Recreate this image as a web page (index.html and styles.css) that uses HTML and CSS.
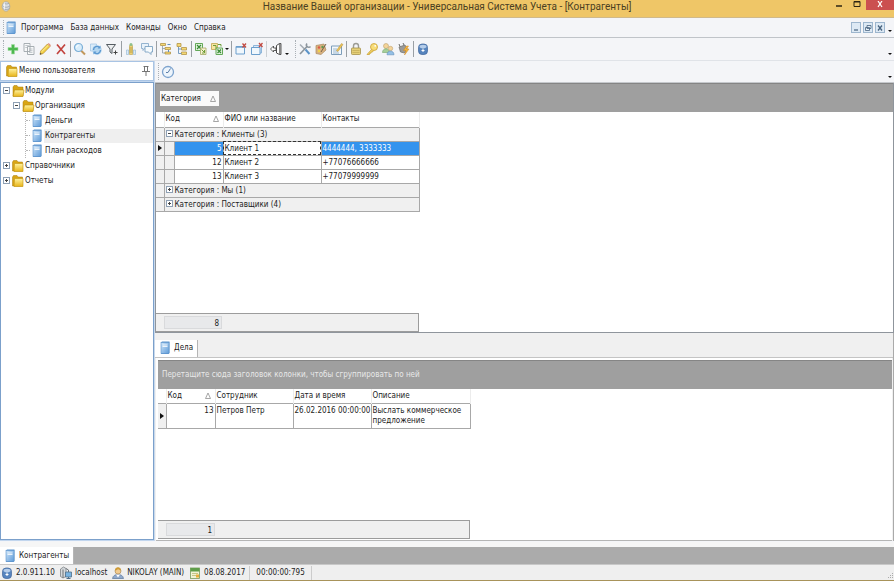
FILE: index.html
```html
<!DOCTYPE html>
<html lang="ru">
<head>
    <meta charset="UTF-8">
    <meta name="viewport" content="width=device-width, initial-scale=1.0">
    <title>Универсальная Система Учета - Контрагенты</title>
    <link rel="stylesheet" href="styles.css">
</head>
<body>
    <!-- icon sprite -->
    <svg class="sprite" aria-hidden="true">
        <defs>
            <linearGradient id="blueFill" x1="0" y1="0" x2="1" y2="1">
                <stop offset="0" stop-color="#cfe6fa"/>
                <stop offset="1" stop-color="#5f9bd8"/>
            </linearGradient>
            <linearGradient id="goldFill" x1="0" y1="0" x2="0" y2="1">
                <stop offset="0" stop-color="#fff3a0"/>
                <stop offset="1" stop-color="#e8b418"/>
            </linearGradient>
        </defs>
        <symbol id="i-book" viewBox="0 0 14 14"><path d="M3 1.500l1-1h7.500v11l-1 1.500H3z" fill="#5c93cc"/><rect x="3" y="1.500" width="8" height="11" fill="url(#blueFill)" stroke="#5c93cc" stroke-width=".6"/><path d="M4.500 4h5M4.500 5.500h5" stroke="#fff" stroke-width=".8"/></symbol>
        <symbol id="i-folder" viewBox="0 0 14 14"><path d="M1.500 12V3l1-1.500h3.500l1 1.500h4.500V12z" fill="#d9a514" stroke="#a87c0c" stroke-width=".5"/><path d="M3.500 4.500h8.500v8H3z" fill="url(#goldFill)" stroke="#c2930f" stroke-width=".6"/></symbol>
        <symbol id="i-open" viewBox="0 0 14 14"><path d="M2 12V3l1-1.500h3l1 1.500h5V12z" fill="#d9a514" stroke="#a87c0c" stroke-width=".5"/><path d="M3.500 6h9.500L12 12.500H2z" fill="url(#goldFill)" stroke="#b98b0d" stroke-width=".6"/></symbol>
        <symbol id="i-db" viewBox="0 0 14 14"><ellipse cx="7" cy="7.500" rx="4.500" ry="5.500" fill="#d9dde1" stroke="#9aa0a5" stroke-width=".7"/><path d="M4 3.500c2 1.500 5 1.500 6.500 0M3 7c2 2 6 2 8.500 0M3.500 10c2 1.500 5.500 1.500 7.500 0" stroke="#93999e" fill="none" stroke-width=".8"/><path d="M5 3v8" stroke="#fff"/></symbol>
        <symbol id="i-plus" viewBox="0 0 14 14"><path d="M5.500 2.500h3v3h3.500v3H8.500v3.500h-3V8.500H2v-3h3.500z" fill="#4db84f" stroke="#a5dda4" stroke-width=".6"/></symbol>
        <symbol id="i-copy" viewBox="0 0 14 14"><path d="M2 1.500h6v8H2zM5.500 4.500h6.500v8H5.500z" fill="#f8f9fa" stroke="#9fa6ac" stroke-width=".9"/><path d="M7 7h3.500M7 8.700h3.500M7 10.400h3.500M3.300 3.500h3.500M3.300 5.500H5" stroke="#a9b0b6" stroke-width=".7"/></symbol>
        <symbol id="i-pencil" viewBox="0 0 14 14"><path d="M2 12.500l.7-3.500L9.500 2l2.500 2.500L5.200 11.500z" fill="#f2cf45" stroke="#b68b2a" stroke-width=".7"/><path d="M9.500 2l1.200-1 2.300 2.300-1 1.200z" fill="#e0927e"/><path d="M3.500 9.800L10.500 3" stroke="#fff1a0"/><path d="M2 12.500l.4-1.700 1.300 1.200z" fill="#444"/></symbol>
        <symbol id="i-cross" viewBox="0 0 14 14"><path d="M3 2.500l8 9.500M11 2.500L3 12" stroke="#c2443f" stroke-width="1.700" fill="none"/></symbol>
        <symbol id="i-lens" viewBox="0 0 14 14"><path d="M8 8.500l4 4" stroke="#c2985c" stroke-width="2"/><circle cx="5.500" cy="5.500" r="4" fill="#d8edfb" stroke="#7baed6" stroke-width="1.200"/><path d="M3.500 5.500a2 2 0 0 1 2-2" stroke="#fff" fill="none"/></symbol>
        <symbol id="i-refresh" viewBox="0 0 14 14"><path d="M1.500 2h6v7h-6z" fill="#dcecf9" stroke="#9cc2e2" stroke-width=".7"/><circle cx="8" cy="8" r="4.800" fill="#b4d6f0"/><path d="M4.500 8a3.500 3.500 0 0 1 6-2.500M11.500 8a3.500 3.500 0 0 1-6 2.500" stroke="#5c98d0" stroke-width="1.400" fill="none"/><path d="M11.500 3.500v3h-3zM4.500 12.500v-3h3z" fill="#5c98d0"/></symbol>
        <symbol id="i-filter" viewBox="0 0 14 14"><path d="M1.500 2.500h9L7 7v4.500L5 10V7z" fill="#eceef0" stroke="#555c62" stroke-width="1"/><path d="M10.500 8.500v4M8.500 10.500h4" stroke="#444" stroke-width="1"/></symbol>
        <symbol id="i-tower" viewBox="0 0 14 14"><path d="M5.500 3.500h3v9h-3z" fill="#f0d071" stroke="#b8a04c" stroke-width=".6"/><path d="M5.500 6h3M5.500 8h3M5.500 10h3" stroke="#a5903c" stroke-width=".7"/><circle cx="7" cy="2.500" r="1.500" fill="#8fc08b"/><path d="M2.500 8h2v4.500h-2zM9.500 8h2v4.500h-2z" fill="#dcebf6" stroke="#8fb3d2" stroke-width=".6"/></symbol>
        <symbol id="i-chat" viewBox="0 0 14 14"><path d="M1.500 1.500h7v5h-4l-1.500 2v-2H1.500z" fill="#e9f2fa" stroke="#8aadcb" stroke-width=".9"/><path d="M5 4.500h7.500V10h-1.500v2.500L8.500 10H5z" fill="#f6fafd" stroke="#7ca1c2" stroke-width=".9"/></symbol>
        <symbol id="i-expand" viewBox="0 0 14 14"><path d="M1.500 1.500h5v2h-5zM6 5.500h5.500v2H6zM6 10h5.500v2H6z" fill="#f5d873" stroke="#b3964a" stroke-width=".8"/><path d="M3.500 4v7H6M3.500 6.500H6" stroke="#8c9aa6" stroke-width=".8" fill="none"/><path d="M9.500 8v2M8.500 2.500h3" stroke="#5e8fc0"/></symbol>
        <symbol id="i-collapse" viewBox="0 0 14 14"><path d="M2 1.500h4v3H2zM6.500 5.500h5v2.500h-5zM6.500 10h5v2.500h-5z" fill="#f5d873" stroke="#b3964a" stroke-width=".8"/><path d="M3.500 5v6.500h3M3.500 7h3" stroke="#6a93ba" stroke-width=".9" fill="none"/></symbol>
        <symbol id="i-xls-out" viewBox="0 0 14 14"><path d="M1.500 1.500h7v7h-7z" fill="#e4f3df" stroke="#63a858"/><path d="M3 3l4 4M7 3L3 7" stroke="#388b35" stroke-width="1.200"/><path d="M6.500 6h5.500v6.500H6.500z" fill="#f7f1cf" stroke="#a5a864" stroke-width=".8"/><path d="M7.500 7.500l3 3M10.500 8v3H8" stroke="#6e9e3a" fill="none"/></symbol>
        <symbol id="i-xls-in" viewBox="0 0 14 14"><path d="M1.500 1.500h6v6h-6z" fill="#f8e6a4" stroke="#c2a650" stroke-width=".8"/><path d="M6 6h6.500v6.500H6z" fill="#e4f3df" stroke="#63a858"/><path d="M7.500 7.500l3.500 3.500M11 7.500L7.500 11" stroke="#388b35" stroke-width="1.200"/><path d="M8 2.500h3v2M3 3.500h3v3" stroke="#6e9e3a" fill="none"/></symbol>
        <symbol id="i-winclose" viewBox="0 0 14 14"><path d="M2 4.500h8.500v7.500H2z" fill="#f0f7fd" stroke="#6c9fcd"/><path d="M2 5h8" stroke="#6c9fcd" stroke-width="1.500"/><path d="M8.500 1.500l3.500 4M12 1.500l-3.500 4" stroke="#c24a42" stroke-width="1.300"/></symbol>
        <symbol id="i-winall" viewBox="0 0 14 14"><path d="M3.500 3.500h8v7.500h-8z" fill="#dbeafa" stroke="#8fb6da"/><path d="M1.500 5.500h8.500v7H1.500z" fill="#f0f7fd" stroke="#6c9fcd"/><path d="M9 1l3.500 4M12.500 1L9 5" stroke="#c24a42" stroke-width="1.300"/></symbol>
        <symbol id="i-door" viewBox="0 0 14 14"><path d="M7.500 3.500l3-2v11l-3-1.500z" fill="#fff" stroke="#3b3b3b" stroke-width=".9"/><path d="M10.500 1.500h1.500v11h-1.500" fill="#bbb" stroke="#3b3b3b" stroke-width=".8"/><path d="M1.500 7l3-3v2h2.500v2.500H4.500V10z" fill="#fff" stroke="#3b3b3b" stroke-width=".8"/></symbol>
        <symbol id="i-tools" viewBox="0 0 14 14"><path d="M2 2.500l5 5" stroke="#a6adb4" stroke-width="1.600"/><path d="M7.500 7.500l4 4.500" stroke="#5c94c8" stroke-width="2"/><path d="M2 12l7.500-8" stroke="#8c959d" stroke-width="1.700"/><path d="M9 1.500a2.200 2.200 0 1 0 3.500 3" stroke="#8c959d" stroke-width="1.500" fill="none"/></symbol>
        <symbol id="i-paint" viewBox="0 0 14 14"><path d="M2 3.500l8-1.500 2 6-5 4.500-5-1z" fill="#d9b17f" stroke="#a98a60" stroke-width=".7"/><circle cx="5" cy="5.500" r="1.200" fill="#de5a45"/><circle cx="8.500" cy="5" r="1.200" fill="#5d9a50"/><circle cx="5" cy="9" r="1.200" fill="#f0d14a"/><path d="M7 10l5-8" stroke="#786248"/></symbol>
        <symbol id="i-form" viewBox="0 0 14 14"><path d="M1.500 4h10v8.500h-10z" fill="#f4f8fc" stroke="#7d9dba"/><path d="M3 7h4M3 9h5M3 11h6" stroke="#86a6c4" stroke-width=".8"/><path d="M6.500 8.500l5-7 1.500 1-5 7z" fill="#ecc558" stroke="#b08a3b" stroke-width=".5"/></symbol>
        <symbol id="i-lock" viewBox="0 0 14 14"><path d="M4.500 7V4a2.500 2.500 0 0 1 5 0v3" fill="none" stroke="#9c9c95" stroke-width="1.400"/><rect x="2.500" y="6" width="9" height="6.500" rx=".8" fill="#e5cf78" stroke="#a5924b" stroke-width=".8"/><path d="M3.500 8.500h7M3.500 10.500h7" stroke="#c2a956" stroke-width=".7"/></symbol>
        <symbol id="i-key" viewBox="0 0 14 14"><path d="M7 7l-5 5.500h2.500v-1.300H6V10h1.500l1-1.500" fill="#f6d768" stroke="#c9a136" stroke-width=".8"/><circle cx="9" cy="5" r="3.500" fill="#f8dd78" stroke="#c9a136" stroke-width=".8"/><circle cx="10.200" cy="3.800" r=".9" fill="#fff"/></symbol>
        <symbol id="i-users" viewBox="0 0 14 14"><circle cx="5" cy="4" r="2.500" fill="#f3d49a" stroke="#bda06b" stroke-width=".6"/><path d="M1.500 10.500c0-5 7-5 7 0z" fill="#a6cf9a" stroke="#76a66c" stroke-width=".6"/><circle cx="9.500" cy="6.500" r="2.200" fill="#f3d49a" stroke="#bda06b" stroke-width=".6"/><path d="M6 12.800c0-5 7-5 7 0z" fill="#94c0e6" stroke="#628fb8" stroke-width=".6"/></symbol>
        <symbol id="i-plug" viewBox="0 0 14 14"><path d="M2 5l6-2 2.500 4.500-3 3.500-4-1z" fill="#9a9a98" stroke="#6d6d6a" stroke-width=".7"/><path d="M3 4.500L2 2M7 3L6 1" stroke="#6d6d6a"/><path d="M9.500 4L6.500 8.500h2.500L7.500 13l4.500-6H9.500l2-3z" fill="#f4b83c" stroke="#ce8423" stroke-width=".5"/></symbol>
        <symbol id="i-info" viewBox="0 0 14 14"><rect x="2.500" y="2" width="9" height="10.500" rx="3.500" fill="#5684be" stroke="#3f669c" stroke-width=".7"/><ellipse cx="7" cy="4.500" rx="3.500" ry="1.800" fill="#b5cdea"/><path d="M7 6.500v3.500M5.500 8.500h3" stroke="#fff"/></symbol>
        <symbol id="i-clock" viewBox="0 0 14 14"><circle cx="7" cy="7" r="5.500" fill="#eef5fc" stroke="#7da3ce" stroke-width="1.300"/><path d="M7 7.500l2.500-4M7 7.500H5" stroke="#5b7fa9" stroke-width="1" fill="none"/></symbol>
        <symbol id="i-pin" viewBox="0 0 14 14"><path d="M4.500 2.500h5M5.500 2.500V7M8.500 2.500V7M3 7.500h8M7 7.500V12" stroke="#666" stroke-width=".9" fill="none"/></symbol>
        <symbol id="i-server" viewBox="0 0 14 14"><path d="M1.500 3l3-2 2.500 1.500v8L4 12l-2.500-1.500z" fill="#d5d9dc" stroke="#6e7479" stroke-width=".7"/><path d="M4 3.500V12M7 2.500l2.500 1.500v2" stroke="#6e7479" fill="none"/><path d="M6.500 6h6v5h-6z" fill="#78b4e2" stroke="#516f88" stroke-width=".8"/><path d="M7.500 12.500h4M9.500 11v1.500" stroke="#516f88"/></symbol>
        <symbol id="i-user" viewBox="0 0 14 14"><path d="M1.500 12.500c.5-5.500 10.500-5.500 11 0z" fill="#8fa9cc" stroke="#46648d" stroke-width=".6"/><path d="M5 8.500l2 3 2-3" fill="#fff"/><circle cx="7" cy="5" r="3" fill="#f2cb8e" stroke="#a17c47" stroke-width=".6"/><path d="M4 4.500c0-4.500 6-4.500 6 0-2-.5-3-1.500-3-1.500S6 4.500 4 4.500z" fill="#cf9c37"/></symbol>
        <symbol id="i-cal" viewBox="0 0 14 14"><rect x="2.500" y="2" width="9" height="10.500" fill="#f2f3d5" stroke="#779a5c" stroke-width=".8"/><path d="M2.500 2h9v3.500h-9z" fill="#5f9e4a"/><path d="M4 7.500h6M4 9.500h6" stroke="#b9ba72" stroke-width=".8"/><path d="M8 8.500h3v3H8z" fill="#e8ae3b"/></symbol>
        <symbol id="i-sort" viewBox="0 0 8 8"><path d="M1.500 6.500L4 1l2.500 5.500z" fill="none" stroke="#8f8f8f" stroke-width=".8"/></symbol>
    </svg>

    <header class="titlebar">
        <svg class="icon"><use href="#i-db"/></svg>
        <h1>Название Вашей организации - Универсальная Система Учета - [Контрагенты]</h1>
        <div class="window-buttons">
            <button type="button" aria-label="Свернуть"><svg viewBox="0 0 10 8"><path d="M2 5h6" stroke="#2c2412" stroke-width="1.500"/></svg></button>
            <button type="button" aria-label="Развернуть"><svg viewBox="0 0 10 8"><path d="M2 .5h6v5H2zM2 1h6" fill="none" stroke="#2c2412"/></svg></button>
            <button type="button" class="close" aria-label="Закрыть"><svg viewBox="0 0 10 8"><path d="M3 0l4 6M7 0L3 6" stroke="#fff" stroke-width="1.200"/></svg></button>
        </div>
    </header>

    <nav class="menubar">
        <span class="grip"></span>
        <svg class="icon"><use href="#i-book"/></svg>
        <button type="button">Программа</button>
        <button type="button">База данных</button>
        <button type="button">Команды</button>
        <button type="button">Окно</button>
        <button type="button">Справка</button>
        <div class="mdi-buttons">
            <button type="button" aria-label="Свернуть окно"><svg viewBox="0 0 8 8"><path d="M2 6h4" stroke="#47637f" stroke-width="1.200"/></svg></button>
            <button type="button" aria-label="Восстановить окно"><svg viewBox="0 0 8 8"><path d="M3 1.500h4v3H3zM1.500 3.500h4v3h-4z" fill="#e6f0f9" stroke="#47637f" stroke-width=".8"/></svg></button>
            <button type="button" aria-label="Закрыть окно"><svg viewBox="0 0 8 8"><path d="M2 1.500l4 5M6 1.500l-4 5" stroke="#47637f" stroke-width="1.300"/></svg></button>
        </div>
        <span class="caret"></span>
    </nav>

    <div class="toolbar" role="toolbar" aria-label="Команды">
        <span class="grip"></span>
        <button type="button" aria-label="Добавить"><svg class="icon"><use href="#i-plus"/></svg></button>
        <button type="button" aria-label="Копировать"><svg class="icon"><use href="#i-copy"/></svg></button>
        <button type="button" aria-label="Изменить"><svg class="icon"><use href="#i-pencil"/></svg></button>
        <button type="button" aria-label="Удалить"><svg class="icon"><use href="#i-cross"/></svg></button>
        <span class="sep"></span>
        <button type="button" aria-label="Поиск"><svg class="icon"><use href="#i-lens"/></svg></button>
        <button type="button" aria-label="Обновить"><svg class="icon"><use href="#i-refresh"/></svg></button>
        <button type="button" aria-label="Фильтр"><svg class="icon"><use href="#i-filter"/></svg></button>
        <span class="sep"></span>
        <button type="button" aria-label="Ширина колонок"><svg class="icon"><use href="#i-tower"/></svg></button>
        <button type="button" aria-label="Примечания"><svg class="icon"><use href="#i-chat"/></svg></button>
        <span class="sep"></span>
        <button type="button" aria-label="Развернуть все"><svg class="icon"><use href="#i-expand"/></svg></button>
        <button type="button" aria-label="Свернуть все"><svg class="icon"><use href="#i-collapse"/></svg></button>
        <span class="sep"></span>
        <button type="button" aria-label="Экспорт"><svg class="icon"><use href="#i-xls-out"/></svg></button>
        <button type="button" aria-label="Импорт" class="split"><svg class="icon"><use href="#i-xls-in"/></svg><span class="caret"></span></button>
        <span class="sep"></span>
        <button type="button" aria-label="Закрыть окно"><svg class="icon"><use href="#i-winclose"/></svg></button>
        <button type="button" aria-label="Закрыть все"><svg class="icon"><use href="#i-winall"/></svg></button>
        <span class="sep light"></span>
        <button type="button" aria-label="Выход"><svg class="icon"><use href="#i-door"/></svg></button>
        <span class="caret"></span>
        <span class="grip"></span>
        <button type="button" aria-label="Настройки"><svg class="icon"><use href="#i-tools"/></svg></button>
        <button type="button" aria-label="Оформление"><svg class="icon"><use href="#i-paint"/></svg></button>
        <button type="button" aria-label="Форма"><svg class="icon"><use href="#i-form"/></svg></button>
        <span class="sep"></span>
        <button type="button" aria-label="Блокировка"><svg class="icon"><use href="#i-lock"/></svg></button>
        <button type="button" aria-label="Пароль"><svg class="icon"><use href="#i-key"/></svg></button>
        <button type="button" aria-label="Пользователи"><svg class="icon"><use href="#i-users"/></svg></button>
        <button type="button" aria-label="Подключение"><svg class="icon"><use href="#i-plug"/></svg></button>
        <span class="sep"></span>
        <button type="button" aria-label="О программе"><svg class="icon"><use href="#i-info"/></svg></button>
        <span class="caret last"></span>
    </div>

    <div class="workspace">
        <aside class="sidebar">
            <div class="sidebar-head">
                <svg class="icon"><use href="#i-folder"/></svg>
                <h2>Меню пользователя</h2>
                <button type="button" aria-label="Закрепить"><svg class="icon"><use href="#i-pin"/></svg></button>
            </div>
            <ul class="tree">
                <li>
                    <div class="node"><span class="toggle minus"></span><svg class="icon"><use href="#i-open"/></svg><span>Модули</span></div>
                    <ul>
                        <li>
                            <div class="node"><span class="toggle minus"></span><svg class="icon"><use href="#i-open"/></svg><span>Организация</span></div>
                            <ul class="leaves">
                                <li><a class="node" href="#money"><svg class="icon"><use href="#i-book"/></svg><span>Деньги</span></a></li>
                                <li><a class="node selected" href="#partners"><svg class="icon"><use href="#i-book"/></svg><span>Контрагенты</span></a></li>
                                <li><a class="node" href="#plan"><svg class="icon"><use href="#i-book"/></svg><span>План расходов</span></a></li>
                            </ul>
                        </li>
                    </ul>
                </li>
                <li><div class="node"><span class="toggle plus"></span><svg class="icon"><use href="#i-folder"/></svg><span>Справочники</span></div></li>
                <li><div class="node"><span class="toggle plus"></span><svg class="icon"><use href="#i-folder"/></svg><span>Отчеты</span></div></li>
            </ul>
        </aside>

        <main class="content">
            <div class="toolbar sub">
                <span class="grip"></span>
                <button type="button" aria-label="История"><svg class="icon"><use href="#i-clock"/></svg></button>
                <span class="caret last"></span>
            </div>

            <section class="pane master">
                <div class="group-bar">
                    <button type="button" class="group-chip">Категория <svg class="sort"><use href="#i-sort"/></svg></button>
                </div>
                <table class="grid clients">
                    <colgroup><col class="c-mark"><col class="c-indent"><col class="c-code"><col class="c-wide"><col class="c-wide"></colgroup>
                    <thead>
                        <tr>
                            <th></th>
                            <th colspan="2"><span class="head">Код <svg class="sort"><use href="#i-sort"/></svg></span></th>
                            <th>ФИО или название</th>
                            <th>Контакты</th>
                        </tr>
                    </thead>
                    <tbody>
                        <tr class="group"><td></td><td colspan="4"><span class="toggle minus"></span>Категория : Клиенты (3)</td></tr>
                        <tr class="current"><td class="mark"><span class="pointer"></span></td><td class="indent"></td><td class="num">5</td><td class="focused">Клиент 1</td><td>4444444, 3333333</td></tr>
                        <tr><td class="mark"></td><td class="indent"></td><td class="num">12</td><td>Клиент 2</td><td>+77076666666</td></tr>
                        <tr><td class="mark"></td><td class="indent"></td><td class="num">13</td><td>Клиент 3</td><td>+77079999999</td></tr>
                        <tr class="group"><td></td><td colspan="4"><span class="toggle plus"></span>Категория : Мы (1)</td></tr>
                        <tr class="group"><td></td><td colspan="4"><span class="toggle plus"></span>Категория : Поставщики (4)</td></tr>
                    </tbody>
                </table>
                <div class="summary clients"><span class="total">8</span></div>
            </section>

            <section class="pane detail">
                <div class="tabs">
                    <button type="button" class="tab"><svg class="icon"><use href="#i-book"/></svg>Дела</button>
                </div>
                <div class="detail-body">
                    <p class="group-bar hint">Перетащите сюда заголовок колонки, чтобы сгруппировать по ней</p>
                    <table class="grid tasks">
                        <colgroup><col class="c-mark"><col class="c-code"><col class="c-mid"><col class="c-mid"><col class="c-text"></colgroup>
                        <thead>
                            <tr>
                                <th></th>
                                <th><span class="head">Код <svg class="sort"><use href="#i-sort"/></svg></span></th>
                                <th>Сотрудник</th>
                                <th>Дата и время</th>
                                <th>Описание</th>
                            </tr>
                        </thead>
                        <tbody>
                            <tr><td class="mark"><span class="pointer"></span></td><td class="num">13</td><td>Петров Петр</td><td class="date">26.02.2016 00:00:00</td><td>Выслать коммерческое предложение</td></tr>
                        </tbody>
                    </table>
                    <div class="summary tasks"><span class="total">1</span></div>
                </div>
            </section>
        </main>
    </div>

    <div class="window-tabs">
        <button type="button" class="tab"><svg class="icon"><use href="#i-book"/></svg>Контрагенты</button>
    </div>

    <footer class="statusbar">
        <span><svg class="icon"><use href="#i-info"/></svg>2.0.911.10</span>
        <span><svg class="icon"><use href="#i-server"/></svg>localhost</span>
        <span><svg class="icon"><use href="#i-user"/></svg>NIKOLAY (MAIN)</span>
        <span><svg class="icon"><use href="#i-cal"/></svg>08.08.2017</span>
        <span class="timer">00:00:00:795</span>
        <svg class="resize" viewBox="0 0 8 8"><path d="M6 1h1v1H6zM4 3h1v1H4zM6 3h1v1H6zM2 5h1v1H2zM4 5h1v1H4zM6 5h1v1H6z" fill="#aaa"/></svg>
    </footer>
</body>
</html>
```

FILE: styles.css
```css
* { box-sizing: border-box; }
body {
    margin: 0;
    height: 100vh;
    display: flex;
    flex-direction: column;
    overflow: hidden;
    background: #f4f5f8;
    color: #1c1c1c;
    font: 8px/14px "DejaVu Sans Condensed", "DejaVu Sans", sans-serif;
    border-bottom: 1px solid #a8935a;
}
h1, h2, p, ul { margin: 0; padding: 0; font: inherit; }
ul { list-style: none; }
button { border: 0; padding: 0; background: none; font: inherit; color: inherit; }
a { color: inherit; text-decoration: none; }
.sprite { position: absolute; width: 0; height: 0; }
.icon { display: block; width: 14px; height: 14px; flex: none; }
.sort { width: 8px; height: 8px; flex: none; }
.caret { width: 0; border: 2px solid transparent; border-top-color: #111; border-bottom: 0; flex: none; }
.grip { align-self: stretch; margin: 2px 0; border-left: 1px dotted #aab0b6; }

/* title bar */
.titlebar {
    display: flex;
    align-items: flex-start;
    height: 18px;
    background: #efc667;
    border-bottom: 1px solid #d0b98a;
    flex: none;
}
.titlebar .icon { width: 12px; height: 12px; margin-right: 52px; }
.titlebar h1 { flex: 1; text-align: center; font: 10px/14px Roboto, sans-serif; color: #4b3f22; }
.window-buttons { display: flex; }
.window-buttons button { width: 18px; height: 10px; }
.window-buttons svg { display: block; width: 10px; height: 8px; margin: 0 auto; }
.window-buttons .close { width: 28px; background: #cb5050; }

/* menu and toolbars */
.menubar {
    display: flex;
    align-items: center;
    height: 20px;
    padding: 0 2px 0 3px;
    border-bottom: 1px solid #c0c4c9;
    flex: none;
}
.menubar > button { margin-right: 7px; }
.menubar .icon { margin-right: 3px; }
.mdi-buttons { display: flex; gap: 2px; margin-left: auto; }
.mdi-buttons button { width: 10px; height: 11px; border: 1px solid #9db6ce; background: #dde9f4; }
.mdi-buttons svg { display: block; width: 8px; height: 8px; }
.menubar .caret { margin: 6px 0 0 3px; }
.toolbar {
    display: flex;
    align-items: center;
    gap: 2px;
    height: 23px;
    padding: 0 3px;
    border-bottom: 1px solid #e0e3e8;
    flex: none;
}
.toolbar .sep { width: 1px; height: 16px; background: #9a9fa4; }
.toolbar .sep.light { background: #ccd0d4; }
.toolbar .split { display: flex; align-items: center; gap: 1px; }
.toolbar .caret { margin-top: 10px; }
.toolbar .split .caret { margin-top: 0; }
.toolbar .caret + .grip { margin-left: 4px; }
.toolbar .last { margin-left: auto; margin-right: -1px; }
.toolbar.sub { height: 22px; border-bottom-color: #c5c8cc; }

.workspace { flex: 1; display: flex; min-height: 0; }

/* sidebar */
.sidebar {
    width: 155px;
    flex: none;
    display: flex;
    flex-direction: column;
    gap: 1px;
    padding-bottom: 1px;
    border-right: 1px solid #c9d9ec;
    background: #c2d6ee;
}
.sidebar-head {
    display: flex;
    align-items: center;
    height: 20px;
    padding: 0 0 0 4px;
    border: 1px solid #a9c4e4;
    background: #fff;
}
.sidebar-head button { margin-left: auto; }
.tree {
    flex: 1;
    border: 1px solid #7ba0cb;
    background: #fff;
    padding: 0 0 0 2px;
}
.tree ul { padding-left: 10px; }
.tree .leaves { margin-left: 12px; padding-left: 0; border-left: 1px dotted #b5b5b5; }
.node { display: flex; align-items: center; height: 15px; }
.node > span:last-child { flex: 1; }
.leaves .node::before { content: ""; width: 4px; border-top: 1px dotted #b5b5b5; }
.leaves .node span { padding-left: 1px; }
.node.selected > span { background: #efefef; }
.toggle {
    display: inline-block;
    width: 7px;
    height: 7px;
    margin-right: 1px;
    border: 1px solid #8ea0b4;
    background: linear-gradient(#444, #444) center / 3px 1px no-repeat, #fff;
    flex: none;
}
.toggle.plus {
    background: linear-gradient(#444, #444) center / 3px 1px no-repeat,
                linear-gradient(#444, #444) center / 1px 3px no-repeat, #fff;
}

/* content */
.content { flex: 1; min-width: 0; display: flex; flex-direction: column; }
.pane { display: flex; flex-direction: column; min-height: 0; background: #fff; }
.master { flex: 250; border: solid #8f959c; border-width: 0 1px 1px; }
.detail { flex: 209; background: #f0f0f0; border-right: 1px solid #aaa; }
.group-bar {
    height: 29px;
    flex: none;
    padding: 7px 4px;
    background: #9f9f9f;
    border-top: 1px solid #858585;
}
.group-chip {
    display: flex;
    align-items: center;
    gap: 8px;
    padding: 0 2px 0 1px;
    background: #fafafa;
    line-height: 15px;
}
.hint { color: #e8e8e8; }

.grid { table-layout: fixed; border-collapse: collapse; width: 263px; flex: none; }
.tasks.grid { width: 312px; }
.c-mark { width: 8px; }
.c-indent { width: 10px; }
.c-code { width: 49px; }
.c-wide { width: 98px; }
.c-mid { width: 78px; }
.c-text { width: 99px; }
.grid th { height: 15px; padding: 0 1px; text-align: left; font-weight: normal; line-height: 14px; border-right: 1px solid #ececec; }
.grid td { height: 14px; padding: 0 1px; line-height: 13px; border: 1px solid #a8a8a8; vertical-align: top; }
.grid td:first-child { border-left: 0; padding: 0; }
.head { display: flex; align-items: center; justify-content: space-between; padding-right: 2px; }
.group td, td.mark, td.indent { background: #f0f0f0; }
.group .toggle { margin: 0 2px 0 0; }
.grid .num { text-align: right; }
.current td.num, .current td:last-child { background: #3393ee; color: #fff; }
.grid .focused { outline: 1px dashed #333; outline-offset: -1px; }
.grid .date { white-space: nowrap; padding-right: 0; }
.grid td.mark { vertical-align: middle; }
.pointer { display: block; width: 0; margin: 0 auto; border: 3px solid transparent; border-left: 4px solid #111; border-right: 0; }
.summary {
    display: flex;
    width: 263px;
    height: 19px;
    margin-top: auto;
    padding: 2px 0 2px 8px;
    border: 1px solid #9c9c9c;
    border-left: 0;
    background: #f0f0f0;
    flex: none;
}
.summary.tasks { width: 312px; }
.total { width: 58px; padding-right: 2px; border: 1px solid #d9dadc; background: #e8e9eb; text-align: right; line-height: 14px; }
.tasks .total { width: 49px; }
.tasks.grid td { line-height: 10px; padding-top: 2px; padding-bottom: 2px; }
.tasks.grid td.mark { padding: 0; }

.tabs { display: flex; height: 25px; padding-top: 7px; border-bottom: 1px solid #c4c4c4; flex: none; }
.tab { display: flex; align-items: center; gap: 2px; padding: 0 4px 0 3px; background: #fff; border-right: 1px solid #b5b5b5; }
.detail-body {
    flex: 1;
    display: flex;
    flex-direction: column;
    margin: 0 1px;
    padding: 2px 0 1px 2px;
    border-bottom: 1px solid #b5b5b5;
    background: #fff;
}

/* bottom bars */
.window-tabs {
    display: flex;
    height: 23px;
    margin-top: 1px;
    border-top: 5px solid #f6f6f6;
    border-bottom: 1px solid #c8c8c8;
    background: #ababab;
    flex: none;
}
.statusbar {
    display: flex;
    align-items: center;
    gap: 4px;
    height: 15px;
    background: #efefef;
    flex: none;
}
.statusbar span { display: flex; align-items: center; gap: 2px; }
.statusbar .timer { border-left: 1px solid #ccc; border-right: 1px solid #ccc; padding: 0 6px; }
.resize { width: 8px; height: 8px; margin-left: auto; align-self: flex-end; }
```
